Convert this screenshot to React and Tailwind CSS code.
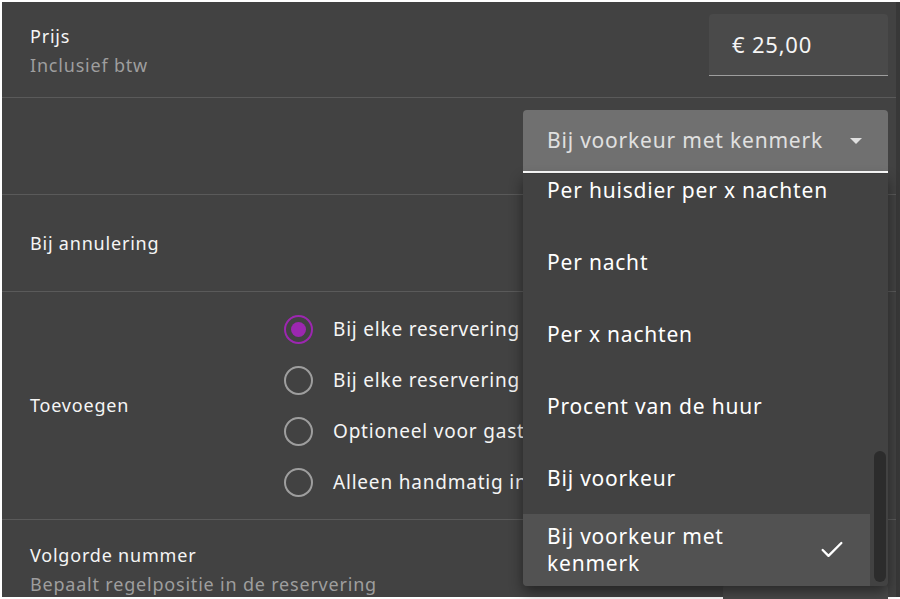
import { Check } from 'lucide-react'

const font = { fontFamily: '"Noto Sans", "Open Sans", sans-serif' }

const options = [
  'Per huisdier per x nachten',
  'Per nacht',
  'Per x nachten',
  'Procent van de huur',
  'Bij voorkeur',
  'Bij voorkeur met kenmerk',
]

const radios = [
  { label: 'Bij elke reservering', checked: true },
  { label: 'Bij elke reservering', checked: false },
  { label: 'Optioneel voor gasten', checked: false },
  { label: 'Alleen handmatig invoegen', checked: false },
]

function Radio({ checked }) {
  return (
    <span
      className={`flex h-[29px] w-[29px] shrink-0 items-center justify-center rounded-full border-[2.5px] ${
        checked ? 'border-[#9c27b0]' : 'border-[#9e9e9e]'
      }`}
    >
      {checked && <span className="h-[15px] w-[15px] rounded-full bg-[#9c27b0]" />}
    </span>
  )
}

export default function App() {
  return (
    <div className="h-[599px] w-[900px] overflow-hidden bg-white pl-[2px] pt-[2px] tracking-[0.05em]" style={font}>
      <div className="flex h-[595px]">
        <div className="relative w-[894px] bg-[#424242] text-[18px] text-[#f5f5f5]">

          {/* Prijs */}
          <div className="flex h-[96px] justify-between border-b border-[#5a5a5a] pl-[28px] pr-[8px]">
            <div className="pt-[20px] leading-[29px]">
              <div>Prijs</div>
              <div className="text-[#9e9e9e]">Inclusief btw</div>
            </div>
            <div className="mt-[12px] flex h-[62px] w-[179px] items-center rounded-t-[4px] border-b border-[#9e9e9e] bg-[#4a4a4a] pl-[23px] text-[22px]">
              € 25,00
            </div>
          </div>

          {/* Select row */}
          <div className="flex h-[97px] justify-end border-b border-[#5a5a5a] pr-[8px]">
            <div className="mt-[12px] flex h-[63px] w-[365px] items-center justify-between rounded-t-[4px] border-b-2 border-white bg-[#707070] pl-[24px] pr-[26px] text-[21px] text-[#e0e0e0]">
              <span className="whitespace-nowrap">Bij voorkeur met kenmerk</span>
              <svg width="12" height="6" viewBox="0 0 12 6" className="shrink-0">
                <path d="M0 0h12L6 6z" fill="#e0e0e0" />
              </svg>
            </div>
          </div>

          {/* Bij annulering */}
          <div className="flex h-[97px] items-center border-b border-[#5a5a5a] pl-[28px]">
            Bij annulering
          </div>

          {/* Toevoegen */}
          <div className="flex h-[228px] items-center border-b border-[#5a5a5a] pl-[28px]">
            <div className="w-[254px]">Toevoegen</div>
            <div className="flex flex-col">
              {radios.map((r, i) => (
                <div key={i} className="flex h-[51px] items-center gap-[20px] text-[19px]">
                  <Radio checked={r.checked} />
                  <span className="whitespace-nowrap">{r.label}</span>
                </div>
              ))}
            </div>
          </div>

          {/* Volgorde nummer */}
          <div className="flex justify-between pl-[28px] pr-[8px]">
            <div className="pt-[21px] leading-[29px]">
              <div>Volgorde nummer</div>
              <div className="text-[#9e9e9e]">Bepaalt regelpositie in de reservering</div>
            </div>
            <div className="mt-[64px] h-[20px] w-[165px] rounded-t-[4px] bg-[#4a4a4a]" />
          </div>

          {/* Dropdown menu */}
          <div className="absolute left-[521px] top-[172px] h-[412px] w-[365px] overflow-hidden rounded-b-[4px] bg-[#424242] shadow-[0_6px_14px_rgba(0,0,0,0.45)]">
            <div className="-mt-[20px]">
              {options.map((o, i) => {
                const selected = i === options.length - 1
                return (
                  <div
                    key={o}
                    className={`flex h-[72px] items-center gap-[16px] pl-[24px] pr-[24px] text-[21px] leading-[27px] text-white ${
                      selected ? 'mr-[18px] bg-[#525252]' : ''
                    }`}
                  >
                    <span className="flex-1">{o}</span>
                    {selected && <Check size={28} strokeWidth={2} className="shrink-0 text-white" />}
                  </div>
                )
              })}
            </div>
            <div className="absolute right-[2px] top-[277px] h-[131px] w-[12px] rounded-full bg-[#2c2c2c]" />
          </div>
        </div>
        <div className="w-[4px] bg-[#383838]" />
      </div>
    </div>
  )
}
